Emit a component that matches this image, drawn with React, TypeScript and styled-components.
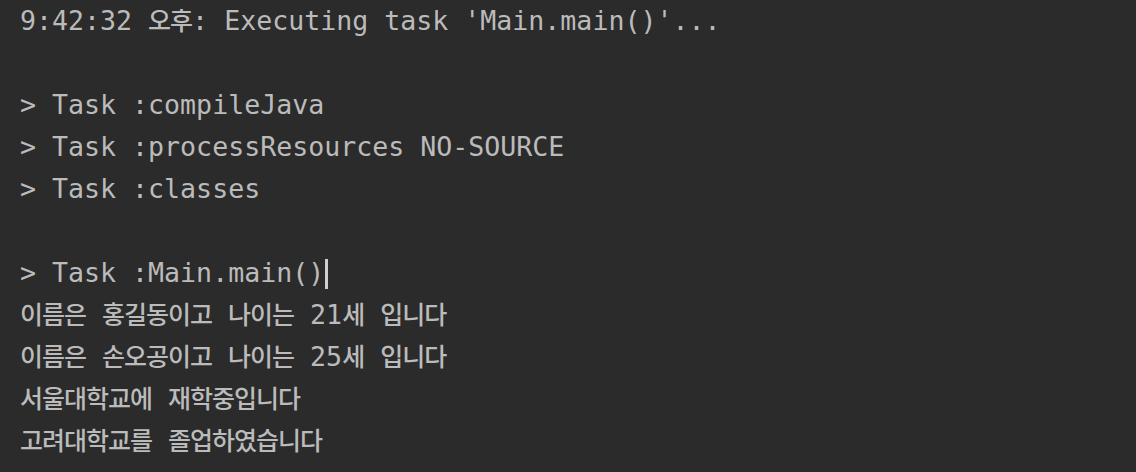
import React from "react";
import styled, { createGlobalStyle } from "styled-components";

const Global = createGlobalStyle`
  html, body {
    margin: 0;
    padding: 0;
    background: #2b2b2b;
  }
  #root {
    min-height: 472px;
    background: #2b2b2b;
  }
`;

const Console = styled.div`
  display: flex;
  flex-direction: column;
  padding: 0 0 0 20px;
  font-family: "DejaVu Sans Mono", "Liberation Mono", "Noto Sans CJK KR", monospace;
  font-size: 26.6px;
  color: #bbbbbb;
  white-space: pre;
`;

const Line = styled.div`
  height: 42px;
  line-height: 42px;
  overflow: visible;
`;

const Ko = styled.span`
  font-family: "Noto Sans CJK KR", sans-serif;
  font-size: 25px;
  font-weight: 500;
  letter-spacing: -1px;
  line-height: 0;
`;

const Caret = styled.span`
  display: inline-block;
  width: 3px;
  height: 30px;
  background: #cfcfcf;
  vertical-align: -7px;
  margin-left: 1px;
`;

export default function App() {
  return (
    <>
      <Global />
      <Console>
        <Line>
          9:42:32 <Ko>오후</Ko>: Executing task 'Main.main()'...
        </Line>
        <Line />
        <Line>&gt; Task :compileJava</Line>
        <Line>&gt; Task :processResources NO-SOURCE</Line>
        <Line>&gt; Task :classes</Line>
        <Line />
        <Line>
          &gt; Task :Main.main()
          <Caret />
        </Line>
        <Line>
          <Ko>이름은</Ko> <Ko>홍길동이고</Ko> <Ko>나이는</Ko> 21<Ko>세</Ko> <Ko>입니다</Ko>
        </Line>
        <Line>
          <Ko>이름은</Ko> <Ko>손오공이고</Ko> <Ko>나이는</Ko> 25<Ko>세</Ko> <Ko>입니다</Ko>
        </Line>
        <Line>
          <Ko>서울대학교에</Ko> <Ko>재학중입니다</Ko>
        </Line>
        <Line>
          <Ko>고려대학교를</Ko> <Ko>졸업하였습니다</Ko>
        </Line>
      </Console>
    </>
  );
}
